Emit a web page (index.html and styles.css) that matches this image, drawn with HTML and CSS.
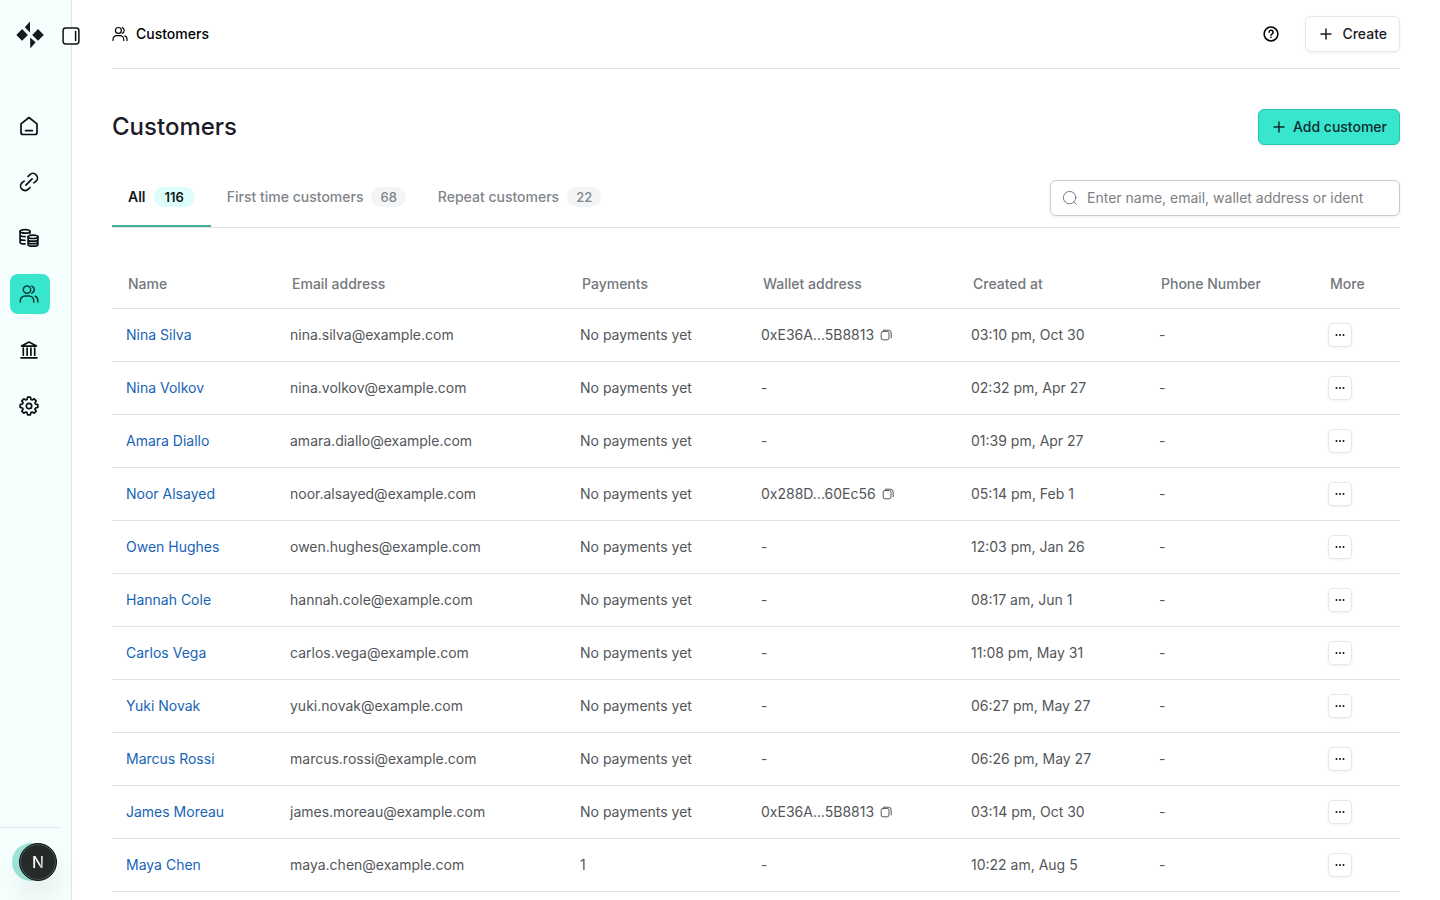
FILE: index.html
```html
<!DOCTYPE html>
<html lang="en">

<head>
    <meta charset="UTF-8">
    <meta name="viewport" content="width=device-width, initial-scale=1.0">
    <title>Customers</title>
    <link rel="stylesheet" href="styles.css">
</head>

<body>

    <!-- shared icons -->
    <svg class="sprite" aria-hidden="true">
        <symbol id="icon-users" viewBox="0 0 20 20">
            <circle cx="8" cy="5.6" r="3.7" />
            <path d="M1.3 18v-1.4a4.6 4.6 0 0 1 4.6-4.6h4.2a4.6 4.6 0 0 1 4.6 4.6V18" />
            <path d="M12.7 2.1a3.7 3.7 0 0 1 0 7M16.2 12.3a4.3 4.3 0 0 1 2.6 4V18" />
        </symbol>
        <symbol id="icon-plus" viewBox="0 0 12 12">
            <path d="M6 1v10M1 6h10" />
        </symbol>
        <symbol id="icon-copy" viewBox="0 0 12 12">
            <rect x="1.2" y="2.4" width="7.8" height="8.4" rx="1.8" />
            <path d="M3.4 1.2h5a2.8 2.8 0 0 1 2.8 2.8v4.8" />
        </symbol>
        <symbol id="icon-dots" viewBox="0 0 12 12">
            <circle cx="2.5" cy="6" r="1" />
            <circle cx="6" cy="6" r="1" />
            <circle cx="9.5" cy="6" r="1" />
        </symbol>
    </svg>

    <div class="layout">
        <aside class="sidebar">
            <a href="#" class="logo" aria-label="Dashboard">
                <svg width="28" height="28" viewBox="0 0 28 28">
                    <path d="M14 0.5v11L8.8 6.2zM14.2 27.5v-11l5.4 4.8zM6.1 8.1l5.8 5.8-5.8 5.8L.3 13.9zM22 8.1l5.8 5.8-5.8 5.8-5.8-5.8z" />
                </svg>
            </a>
            <button type="button" class="sidebar-toggle" aria-label="Toggle sidebar">
                <svg class="icon" width="18" height="18" viewBox="0 0 18 18">
                    <rect x="1.1" y="1.1" width="15.8" height="15.8" rx="2.6" />
                    <path d="M13.6 4.4v9.2" />
                </svg>
            </button>

            <nav class="nav">
                <a href="#" class="nav-item" aria-label="Home">
                    <svg class="icon" width="20" height="20" viewBox="0 0 20 20">
                        <path d="M2 7.8L10 1.5l8 6.3v8.7a2 2 0 0 1-2 2H4a2 2 0 0 1-2-2zM6.6 14.6h6.8" />
                    </svg>
                </a>
                <a href="#" class="nav-item" aria-label="Payment links">
                    <svg class="icon" width="20" height="20" viewBox="0 0 20 20">
                        <path d="M6.9 13.1l6.2-6.2" />
                        <path d="M9 4.5l1.7-1.7a4.5 4.5 0 0 1 6.4 6.4c-.7.7-1.2 1.2-2.2 1.6" />
                        <path d="M11 15.5l-1.7 1.7a4.5 4.5 0 0 1-6.4-6.4c.7-.7 1.2-1.2 2.2-1.6" />
                    </svg>
                </a>
                <a href="#" class="nav-item" aria-label="Payments">
                    <svg class="icon" width="20" height="20" viewBox="0 0 20 20">
                        <ellipse cx="6" cy="3.4" rx="4.9" ry="1.7" />
                        <path d="M1.1 3.4v10.8c0 1 1.8 1.7 4.9 1.7M10.9 3.4v2M1.1 7c0 1 1.8 1.6 5 1.6M1.1 10.6c0 1 1.8 1.7 4.9 1.7" />
                        <ellipse cx="14" cy="8.8" rx="4.9" ry="1.7" />
                        <path d="M9.1 8.8v7.6c0 1.1 2.2 1.8 4.9 1.8s4.9-.7 4.9-1.8V8.8M9.1 11.4c0 1 2.2 1.7 4.9 1.7s4.9-.7 4.9-1.7M9.1 14c0 1 2.2 1.7 4.9 1.7s4.9-.7 4.9-1.7" />
                    </svg>
                </a>
                <a href="#" class="nav-item active" aria-label="Customers">
                    <svg class="icon" width="20" height="20"><use href="#icon-users" /></svg>
                </a>
                <a href="#" class="nav-item" aria-label="Bank">
                    <svg class="icon" width="20" height="20" viewBox="0 0 20 20">
                        <path d="M2.6 6.1L10 2l7.4 4.1zM4.3 8.2v7M8.1 8.2v7M11.9 8.2v7M15.7 8.2v7M2 17.8h16" />
                    </svg>
                </a>
                <a href="#" class="nav-item" aria-label="Settings">
                    <svg class="icon" width="20" height="20" viewBox="0 0 20 20">
                        <circle cx="10" cy="10" r="2.7" />
                        <path d="M8.6 1.2h2.8L12 3.5l1.2.5 2-1.2 2 2-1.2 2 .5 1.2 2.3.6v2.8l-2.3.6-.5 1.2 1.2 2-2 2-2-1.2-1.2.5-.6 2.3H8.6L8 16.5 6.8 16l-2 1.2-2-2 1.2-2-.5-1.2-2.3-.6V8.6L3.5 8 4 6.8l-1.2-2 2-2 2 1.2L8 3.5z" />
                    </svg>
                </a>
            </nav>

            <div class="sidebar-footer">
                <div class="avatar">
                    <button type="button" class="dev-badge" aria-label="Open dev tools"><span class="dev-letter">N</span></button>
                </div>
            </div>
        </aside>

        <main class="content">
            <header class="topbar">
                <div class="breadcrumb">
                    <svg class="icon" width="16" height="16"><use href="#icon-users" /></svg>
                    <span>Customers</span>
                </div>
                <div class="topbar-actions">
                    <button type="button" class="help" aria-label="Help">
                        <svg class="icon" width="16" height="16" viewBox="0 0 16 16">
                            <circle cx="8" cy="8" r="6.9" />
                            <path d="M6.1 6.2a2 2 0 1 1 2.8 1.9c-.6.3-.9.6-.9 1.1M8 11.3v.1" />
                        </svg>
                    </button>
                    <button type="button" class="btn">
                        <svg class="icon" width="12" height="12"><use href="#icon-plus" /></svg>
                        Create
                    </button>
                </div>
            </header>

            <div class="page-head">
                <h1>Customers</h1>
                <button type="button" class="btn btn-primary">
                    <svg class="icon" width="12" height="12"><use href="#icon-plus" /></svg>
                    Add customer
                </button>
            </div>

            <div class="toolbar">
                <div class="tabs" role="tablist">
                    <button type="button" class="tab active" role="tab" aria-selected="true">All <span class="count">116</span></button>
                    <button type="button" class="tab" role="tab">First time customers <span class="count">68</span></button>
                    <button type="button" class="tab" role="tab">Repeat customers <span class="count">22</span></button>
                </div>
                <label class="search">
                    <svg class="icon" width="16" height="16" viewBox="0 0 16 16">
                        <circle cx="7.6" cy="7.6" r="6.2" />
                        <path d="M12.2 12.2l2.2 2.2" />
                    </svg>
                    <input type="text" aria-label="Search customers" placeholder="Enter name, email, wallet address or ident">
                </label>
            </div>

            <table class="customers">
                <colgroup>
                    <col class="col-name">
                    <col class="col-email">
                    <col class="col-payments">
                    <col class="col-wallet">
                    <col class="col-created">
                    <col class="col-phone">
                    <col class="col-more">
                </colgroup>
                <thead>
                    <tr>
                        <th>Name</th>
                        <th>Email address</th>
                        <th>Payments</th>
                        <th>Wallet address</th>
                        <th>Created at</th>
                        <th>Phone Number</th>
                        <th>More</th>
                    </tr>
                </thead>
                <tbody>
                    <tr>
                        <td><a href="#">Nina Silva</a></td>
                        <td>nina.silva@example.com</td>
                        <td>No payments yet</td>
                        <td><span class="wallet">0xE36A...5B8813 <button type="button" class="copy" aria-label="Copy address"><svg class="icon" width="12" height="12"><use href="#icon-copy" /></svg></button></span></td>
                        <td>03:10 pm, Oct 30</td>
                        <td>-</td>
                        <td><button type="button" class="more" aria-label="More"><svg width="12" height="12"><use href="#icon-dots" /></svg></button></td>
                    </tr>
                    <tr>
                        <td><a href="#">Nina Volkov</a></td>
                        <td>nina.volkov@example.com</td>
                        <td>No payments yet</td>
                        <td>-</td>
                        <td>02:32 pm, Apr 27</td>
                        <td>-</td>
                        <td><button type="button" class="more" aria-label="More"><svg width="12" height="12"><use href="#icon-dots" /></svg></button></td>
                    </tr>
                    <tr>
                        <td><a href="#">Amara Diallo</a></td>
                        <td>amara.diallo@example.com</td>
                        <td>No payments yet</td>
                        <td>-</td>
                        <td>01:39 pm, Apr 27</td>
                        <td>-</td>
                        <td><button type="button" class="more" aria-label="More"><svg width="12" height="12"><use href="#icon-dots" /></svg></button></td>
                    </tr>
                    <tr>
                        <td><a href="#">Noor Alsayed</a></td>
                        <td>noor.alsayed@example.com</td>
                        <td>No payments yet</td>
                        <td><span class="wallet">0x288D...60Ec56 <button type="button" class="copy" aria-label="Copy address"><svg class="icon" width="12" height="12"><use href="#icon-copy" /></svg></button></span></td>
                        <td>05:14 pm, Feb 1</td>
                        <td>-</td>
                        <td><button type="button" class="more" aria-label="More"><svg width="12" height="12"><use href="#icon-dots" /></svg></button></td>
                    </tr>
                    <tr>
                        <td><a href="#">Owen Hughes</a></td>
                        <td>owen.hughes@example.com</td>
                        <td>No payments yet</td>
                        <td>-</td>
                        <td>12:03 pm, Jan 26</td>
                        <td>-</td>
                        <td><button type="button" class="more" aria-label="More"><svg width="12" height="12"><use href="#icon-dots" /></svg></button></td>
                    </tr>
                    <tr>
                        <td><a href="#">Hannah Cole</a></td>
                        <td>hannah.cole@example.com</td>
                        <td>No payments yet</td>
                        <td>-</td>
                        <td>08:17 am, Jun 1</td>
                        <td>-</td>
                        <td><button type="button" class="more" aria-label="More"><svg width="12" height="12"><use href="#icon-dots" /></svg></button></td>
                    </tr>
                    <tr>
                        <td><a href="#">Carlos Vega</a></td>
                        <td>carlos.vega@example.com</td>
                        <td>No payments yet</td>
                        <td>-</td>
                        <td>11:08 pm, May 31</td>
                        <td>-</td>
                        <td><button type="button" class="more" aria-label="More"><svg width="12" height="12"><use href="#icon-dots" /></svg></button></td>
                    </tr>
                    <tr>
                        <td><a href="#">Yuki Novak</a></td>
                        <td>yuki.novak@example.com</td>
                        <td>No payments yet</td>
                        <td>-</td>
                        <td>06:27 pm, May 27</td>
                        <td>-</td>
                        <td><button type="button" class="more" aria-label="More"><svg width="12" height="12"><use href="#icon-dots" /></svg></button></td>
                    </tr>
                    <tr>
                        <td><a href="#">Marcus Rossi</a></td>
                        <td>marcus.rossi@example.com</td>
                        <td>No payments yet</td>
                        <td>-</td>
                        <td>06:26 pm, May 27</td>
                        <td>-</td>
                        <td><button type="button" class="more" aria-label="More"><svg width="12" height="12"><use href="#icon-dots" /></svg></button></td>
                    </tr>
                    <tr>
                        <td><a href="#">James Moreau</a></td>
                        <td>james.moreau@example.com</td>
                        <td>No payments yet</td>
                        <td><span class="wallet">0xE36A...5B8813 <button type="button" class="copy" aria-label="Copy address"><svg class="icon" width="12" height="12"><use href="#icon-copy" /></svg></button></span></td>
                        <td>03:14 pm, Oct 30</td>
                        <td>-</td>
                        <td><button type="button" class="more" aria-label="More"><svg width="12" height="12"><use href="#icon-dots" /></svg></button></td>
                    </tr>
                    <tr>
                        <td><a href="#">Maya Chen</a></td>
                        <td>maya.chen@example.com</td>
                        <td>1</td>
                        <td>-</td>
                        <td>10:22 am, Aug 5</td>
                        <td>-</td>
                        <td><button type="button" class="more" aria-label="More"><svg width="12" height="12"><use href="#icon-dots" /></svg></button></td>
                    </tr>
                </tbody>
            </table>
        </main>
    </div>

</body>

</html>
```
FILE: styles.css
```css
* {
    box-sizing: border-box;
}

body {
    margin: 0;
    font-family: Inter, "Liberation Sans", sans-serif;
    font-size: 14px;
    line-height: 20px;
    color: #1c1c28;
    background: #fff;
}

button,
input {
    font: inherit;
    color: inherit;
}

button {
    padding: 0;
    border: none;
    background: none;
    cursor: pointer;
}

a {
    color: inherit;
    text-decoration: none;
}

svg {
    display: block;
    flex-shrink: 0;
}

.sprite {
    position: absolute;
    width: 0;
    height: 0;
}

.icon {
    fill: none;
    stroke: currentColor;
    stroke-width: 1.5;
    stroke-linecap: round;
    stroke-linejoin: round;
}

.layout {
    display: flex;
    min-height: 100vh;
}

/* Sidebar */
.sidebar {
    position: relative;
    display: flex;
    flex-direction: column;
    flex-shrink: 0;
    width: 72px;
    background: #f5fffe;
    border-right: 1px solid #dfe5e6;
}

.logo {
    margin: 21px 0 0 16px;
    fill: #111a1c;
}

/* sits on the sidebar's edge */
.sidebar-toggle {
    position: absolute;
    top: 27px;
    right: -9px;
    border-radius: 4px;
    background: #fbffff;
    color: #111;
}

.nav {
    display: flex;
    flex-direction: column;
    gap: 16px;
    margin: 57px 0 0 10px;
}

.nav-item {
    display: flex;
    align-items: center;
    width: 40px;
    height: 40px;
    padding-left: 9px;
    border-radius: 8px;
    color: #0b0f10;
}

.nav-item .icon {
    stroke-width: 1.7;
}

.nav-item.active {
    background: #37e6cd;
    color: #0b3a3c;
}

.nav-item.active .icon {
    stroke-width: 1.5;
}

.sidebar-footer {
    width: 59px;
    margin-top: auto;
    padding: 15px 0 19px 12px;
    border-top: 1px solid #dfe5e6;
}

.avatar {
    width: 38px;
    height: 38px;
    padding-left: 7px;
    border-radius: 50%;
    background: #9fe5da;
}

.dev-badge {
    width: 38px;
    height: 38px;
    border: 1px solid #111;
    border-radius: 50%;
    background: #252b2b;
    box-shadow: inset 0 0 0 1px #515656, 0 16px 32px -8px rgba(0, 0, 0, 0.24);
    font-size: 16px;
    font-weight: 500;
}

.dev-letter {
    background: linear-gradient(100deg, #fff 60%, #6a7070);
    background-clip: text;
    -webkit-background-clip: text;
    color: transparent;
}

/* Header */
.content {
    flex: 1;
    min-width: 0;
    padding: 0 40px;
}

.topbar {
    display: flex;
    align-items: center;
    justify-content: space-between;
    padding: 16px 0;
    border-bottom: 1px solid #e2e3e4;
}

.breadcrumb {
    display: flex;
    align-items: center;
    gap: 8px;
    font-weight: 500;
    color: #000;
}

.topbar-actions {
    display: flex;
    align-items: center;
    gap: 26px;
}

.help {
    color: #000;
}

.btn {
    display: flex;
    align-items: center;
    gap: 10px;
    height: 36px;
    padding: 0 12px 0 14px;
    border: 1px solid #e6e7ea;
    border-radius: 6px;
    background: #fff;
    box-shadow: 0 1px 3px rgba(0, 0, 0, 0.06);
    font-weight: 500;
}

.btn-primary {
    gap: 8px;
    border-color: #2bc4ae;
    background: #37e6cd;
    color: #0f2b2e;
}

.page-head {
    display: flex;
    align-items: center;
    justify-content: space-between;
    margin: 40px 0 22px;
}

h1 {
    margin: 0;
    font-size: 24px;
    line-height: 32px;
    font-weight: 500;
}

/* Tabs and search */
.toolbar {
    display: flex;
    align-items: flex-end;
    justify-content: space-between;
    border-bottom: 1px solid #e0e2e4;
}

.tabs {
    display: flex;
}

.tab {
    display: flex;
    align-items: center;
    gap: 8px;
    height: 60px;
    padding: 0 16px;
    color: #80858b;
    font-weight: 500;
}

.tab.active {
    box-shadow: inset 0 -2px #45ad9c;
    color: #14161c;
    font-weight: 600;
}

.count {
    padding: 0 9px;
    border-radius: 10px;
    background: #f3f4f5;
    font-size: 13px;
}

.tab.active .count {
    padding: 0 11px;
    background: #dcfdf9;
}

.search {
    display: flex;
    align-items: center;
    gap: 9px;
    width: 350px;
    height: 36px;
    margin-bottom: 11px;
    padding: 0 11px;
    border: 1px solid #c9cbd1;
    border-radius: 6px;
    box-shadow: 0 1px 3px rgba(0, 0, 0, 0.08);
    color: #777b80;
}

.search .icon {
    stroke-width: 1;
}

.search input {
    flex: 1;
    min-width: 0;
    padding: 0;
    border: none;
    outline: none;
    background: none;
}

.search input::placeholder {
    color: #7d8084;
}

/* Table */
.customers {
    width: 100%;
    margin-top: 32px;
    border-collapse: separate;
    border-spacing: 0;
    table-layout: fixed;
}

.col-name {
    width: 164px;
}

.col-email {
    width: 290px;
}

.col-payments {
    width: 181px;
}

.col-wallet {
    width: 210px;
}

.col-created {
    width: 188px;
}

.col-phone {
    width: 169px;
}

.col-more {
    width: 86px;
}

th,
td {
    border-bottom: 1px solid #e0e1e3;
    text-align: left;
    white-space: nowrap;
}

th {
    height: 49px;
    padding: 0 0 0 16px;
    color: #74777c;
    font-weight: 500;
}

td {
    height: 53px;
    padding: 0 0 0 14px;
    color: #53565a;
}

td a {
    color: #1763b6;
}

.wallet {
    display: flex;
    align-items: center;
    gap: 6px;
}

.copy {
    color: #53565a;
}

.copy .icon {
    stroke-width: 1;
}

.more {
    display: flex;
    align-items: center;
    justify-content: center;
    width: 24px;
    height: 24px;
    border: 1px solid #e6e7ea;
    border-radius: 5px;
    background: #fff;
    box-shadow: 0 1px 3px rgba(0, 0, 0, 0.06);
    fill: #111;
}
```
